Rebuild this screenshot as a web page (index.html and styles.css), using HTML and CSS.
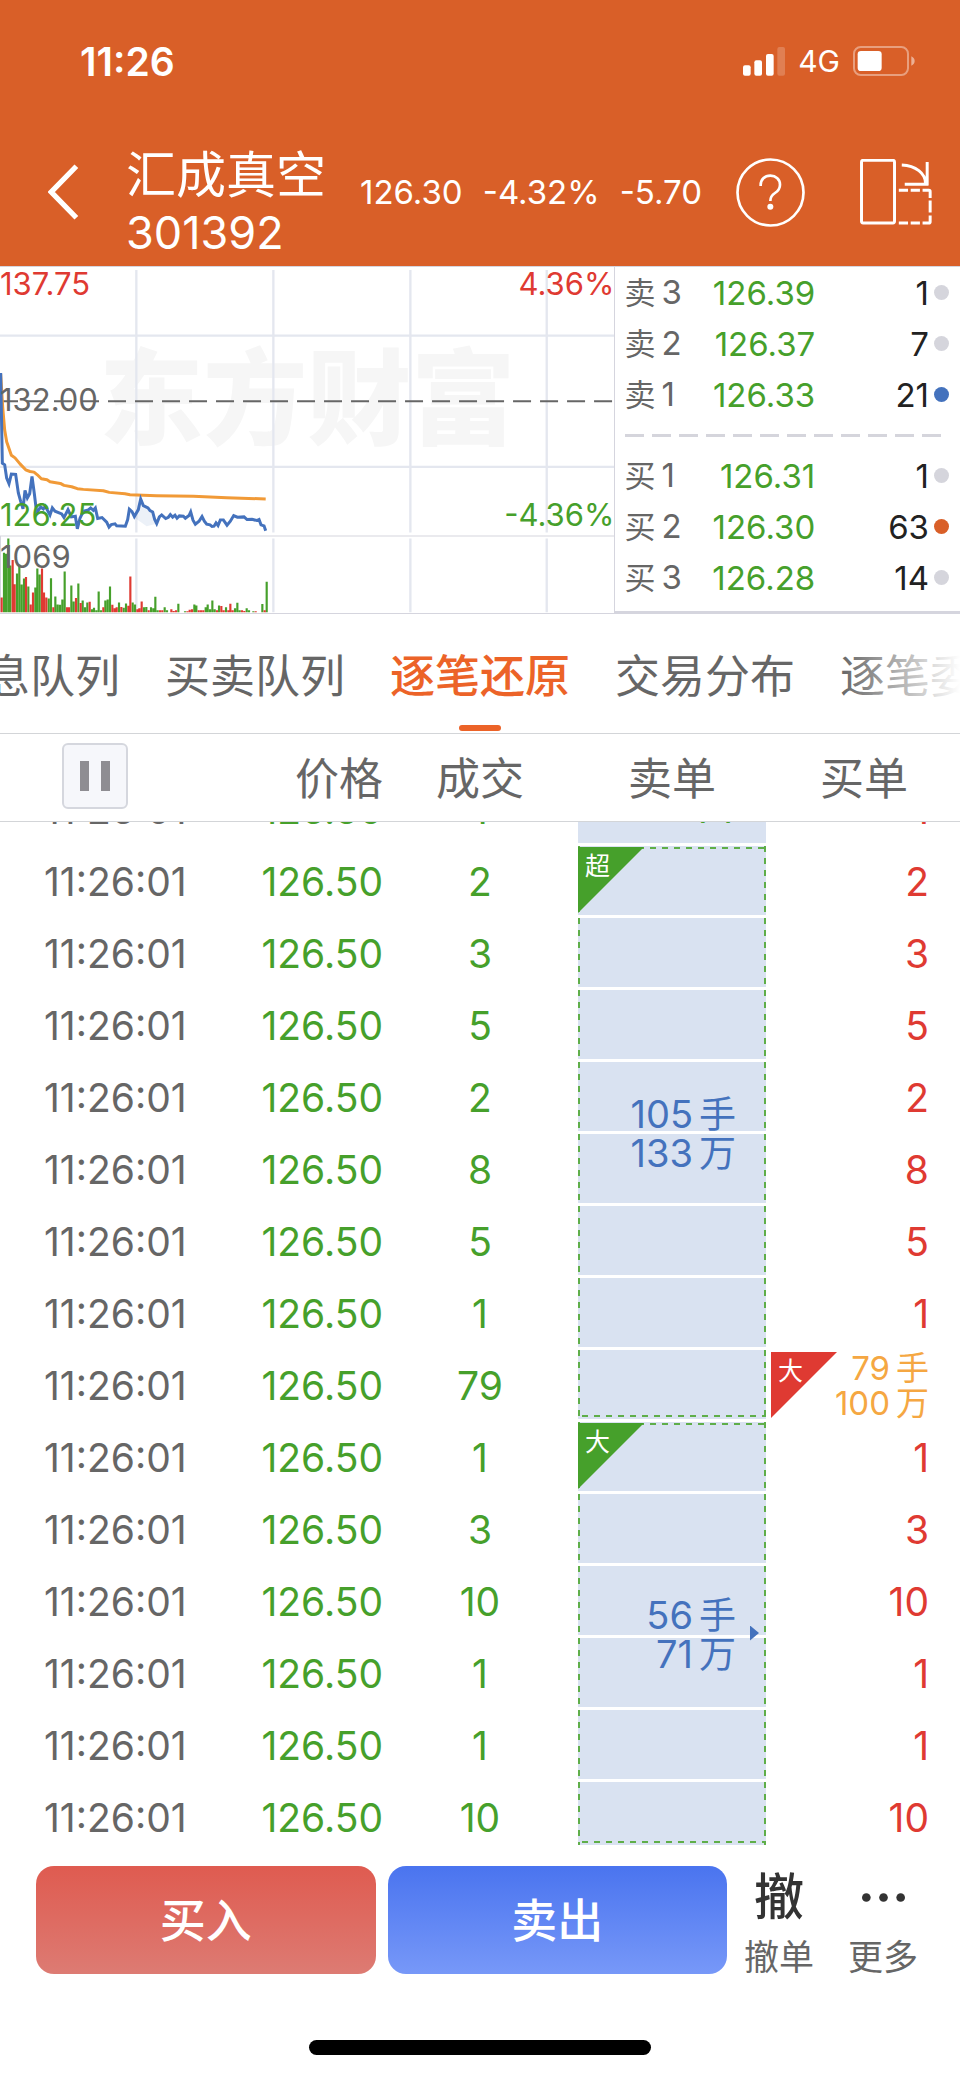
FILE: index.html
```html
<!DOCTYPE html>
<html lang="zh-CN">
<head>
<meta charset="utf-8">
<meta name="viewport" content="width=device-width, initial-scale=1">
<title>汇成真空 301392</title>
<link rel="stylesheet" href="styles.css">
</head>
<body>
<header class="header">
  <div class="status">
    <span class="status-time">11:26</span>
    <div class="status-right">
      <svg class="signal" viewBox="0 0 126 87" aria-hidden="true"><g fill="#fff"><rect x="0" y="55" width="23" height="31" rx="6"/><rect x="34" y="40" width="23" height="46" rx="6"/><rect x="69" y="21" width="23" height="65" rx="6"/><rect x="103" y="0" width="23" height="86" rx="6" opacity=".2"/></g></svg>
      <span>4G</span>
      <svg class="battery" viewBox="0 0 186 90" aria-hidden="true"><rect x="3" y="3" width="162" height="84" rx="20" fill="none" stroke="#fff" stroke-opacity=".4" stroke-width="6"/><rect x="14" y="15" width="72" height="60" rx="10" fill="#fff"/><path d="M175 31q10 5 10 14t-10 14z" fill="#fff" fill-opacity=".5"/></svg>
    </div>
  </div>
  <div class="nav">
    <button class="back" type="button" aria-label="返回"><svg viewBox="0 0 94 168" aria-hidden="true"><path d="M86 6 10 84l76 78" fill="none" stroke="#fff" stroke-width="16"/></svg></button>
    <h1 class="stock"><span class="stock-name">汇成真空</span><span class="stock-code">301392</span></h1>
    <div class="quote"><span>126.30</span><span>-4.32%</span><span>-5.70</span></div>
    <button class="help" type="button" aria-label="帮助"><svg viewBox="0 0 207 207" aria-hidden="true"><g fill="none" stroke="#fff" stroke-width="8"><circle cx="103.500" cy="103.500" r="99"/><path d="M74 84V81C74 64 86 53 103 53S132 64 132 80C132 92 126 99 117 105C106 112 103 117 103 129"/></g><circle cx="103" cy="146" r="9" fill="#fff"/></svg></button>
    <button class="rotate" type="button" aria-label="横屏"><svg viewBox="1140 474 217 200" aria-hidden="true"><g fill="none" stroke="#fff" stroke-width="9"><rect x="1144" y="478" width="100" height="190" rx="5"/><path d="M1266 492C1308 494 1338 517 1338 548M1343 483V554M1275 550.500H1346"/><path d="M1257 569h28M1293 569h28M1329 569h19q4 0 4 4v19M1352 600v36M1352 645v19q0 4-4 4h-19M1321 668h-28M1285 668h-28"/></g></svg></button>
  </div>
</header>

<section class="market">
  <div class="chart">
    <span class="watermark" aria-hidden="true">东方财富</span>
    <svg class="plot" viewBox="0 18 1843 1044" preserveAspectRatio="none" role="img" aria-label="分时走势">
      <g fill="none">
        <path stroke="#e4e7ef" stroke-width="7" d="M0 225H1843M0 621H1843M409 27V819M820 27V819M1231 27V819M1640 27V819M409 837V1060M820 837V1060M1231 837V1060M1640 837V1060"/>
        <path stroke="#d5d5de" stroke-width="3" d="M0 829.500H1843M1.500 829V1060"/>
        <path stroke="#666" stroke-width="6" stroke-dasharray="54 27" d="M0 423H1836"/>
        <path fill="#4472bd" fill-opacity=".1" d="M412 740L422 710 432 740 460 755 472 792 440 800 405 775z"/>
        <path stroke="#f19a37" stroke-width="9" stroke-linejoin="round" d="M2 340L8 440 14 510 20 545 34 586 45 594 60 612 77 630 90 635 102 637 112 645 124 657 141 660 150 666 181 671 192 677 215 681 232 687 250 689 310 693 328 698 375 702 390 705 470 708 580 710 680 714 797 718"/>
        <path stroke="#4472bd" stroke-width="9" stroke-linejoin="miter" d="M2 338L5 500 7 610 14 615 20 655 27 672 34 643 47 644 55 700 62 725 69 748 75 692 82 715 89 702 96 650 103 702 110 760 122 742 130 748 136 740 150 766 157 745 165 755 185 763 192 774 204 750 214 772 226 770 232 808 240 776 250 755 265 751 272 745 280 752 286 745 293 777 306 774 320 788 327 803 334 795 345 793 350 799 376 800 383 780 388 749 396 756 403 771 415 750 422 718 430 738 444 745 450 753 458 757 464 780 470 792 478 772 485 766 497 777 505 773 511 765 518 773 525 767 531 776 538 769 550 770 556 776 567 768 572 757 579 782 586 794 597 785 606 771 613 785 620 794 630 796 636 801 642 800 648 790 654 798 661 781 670 781 681 797 691 785 701 768 712 773 732 772 741 780 756 779 770 783 777 780 783 796 792 799 797 814"/>
        <path stroke="#46a02b" stroke-width="6.500" d="M12 1060v-180M18 1060v-177M25 1060v-223M31 1060v-141M51 1060v-117M58 1060v-144M65 1060v-84M72 1060v-102M85 1060v-78M106 1060v-75M112 1060v-132M119 1060v-114M146 1060v-42M153 1060v-103M166 1060v-48M173 1060v-24M180 1060v-23M187 1060v-39M194 1060v-123M214 1060v-81M221 1060v-33M235 1060v-87M248 1060v-36M255 1060v-15M262 1060v-30M276 1060v-9M282 1060v-14M289 1060v-6M296 1060v-63M303 1060v-6M316 1060v-36M323 1060v-39M330 1060v-78M357 1060v-30M371 1060v-14M378 1060v-27M398 1060v-30M405 1060v-24M432 1060v-15M439 1060v-16M453 1060v-15M460 1060v-12M466 1060v-47M473 1060v-6M494 1060v-15M501 1060v-6M535 1060v-26M555 1060v-3M583 1060v-24M589 1060v-21M617 1060v-15M623 1060v-24M630 1060v-9M637 1060v-36M644 1060v-9M657 1060v-21M678 1060v-15M705 1060v-12M712 1060v-29M719 1060v-6M740 1060v-12M747 1060v-6M760 1060v-3M787 1060v-25M800 1060v-92"/>
        <path stroke="#df3a32" stroke-width="6.500" d="M5 1060v-45M38 1060v-158M44 1060v-85M78 1060v-107M92 1060v-24M99 1060v-60M126 1060v-132M132 1060v-60M139 1060v-45M160 1060v-15M201 1060v-15M207 1060v-15M228 1060v-43M242 1060v-28M269 1060v-32M310 1060v-15M337 1060v-23M344 1060v-12M350 1060v-15M364 1060v-16M385 1060v-20M391 1060v-108M412 1060v-9M418 1060v-12M425 1060v-33M446 1060v-6M480 1060v-6M487 1060v-6M514 1060v-9M521 1060v-4M528 1060v-6M562 1060v-3M569 1060v-8M576 1060v-9M596 1060v-6M603 1060v-6M610 1060v-6M651 1060v-6M664 1060v-19M671 1060v-6M685 1060v-6M691 1060v-26M698 1060v-6M726 1060v-6M733 1060v-4M767 1060v-3M794 1060v-6"/>
      </g>
    </svg>
    <div class="price-labels">
      <div class="label-row red"><span>137.75</span><span>4.36%</span></div>
      <div class="label-row gray"><span>132.00</span></div>
      <div class="label-row green"><span>126.25</span><span>-4.36%</span></div>
    </div>
    <div class="volume-label gray">1069</div>
  </div>
  <div class="book">
    <table class="levels">
      <tr><th scope="row">卖<span>3</span></th><td class="green">126.39</td><td class="qty">1<i class="dot"></i></td></tr>
      <tr><th scope="row">卖<span>2</span></th><td class="green">126.37</td><td class="qty">7<i class="dot"></i></td></tr>
      <tr><th scope="row">卖<span>1</span></th><td class="green">126.33</td><td class="qty">21<i class="dot dot-blue"></i></td></tr>
    </table>
    <div class="divider"></div>
    <table class="levels">
      <tr><th scope="row">买<span>1</span></th><td class="green">126.31</td><td class="qty">1<i class="dot"></i></td></tr>
      <tr><th scope="row">买<span>2</span></th><td class="green">126.30</td><td class="qty">63<i class="dot dot-orange"></i></td></tr>
      <tr><th scope="row">买<span>3</span></th><td class="green">126.28</td><td class="qty">14<i class="dot"></i></td></tr>
    </table>
  </div>
</section>

<nav class="tabs">
  <a href="#message">消息队列</a>
  <a href="#queue">买卖队列</a>
  <a href="#restore" class="active" aria-current="page">逐笔还原</a>
  <a href="#spread">交易分布</a>
  <a href="#orders">逐笔委托</a>
</nav>

<table class="ticks ticks-head">
  <colgroup><col class="col-time"><col class="col-price"><col class="col-vol"><col class="col-sell"><col class="col-buy"></colgroup>
  <tr>
    <th class="time"><button class="pause" type="button" aria-label="暂停"><svg viewBox="0 0 30 30" aria-hidden="true"><path fill="#8e8d92" d="M0 0h9v30H0zM21 0h9v30h-9z"/></svg></button></th>
    <th class="price">价格</th><th>成交</th><th>卖单</th><th>买单</th>
  </tr>
</table>

<main class="scroller">
  <table class="ticks ticks-body">
    <colgroup><col class="col-time"><col class="col-price"><col class="col-vol"><col class="col-sell"><col class="col-buy"></colgroup>
    <tr><td class="time">11:26:01</td><td class="price">126.50</td><td class="vol">1</td><td class="sell"><div class="single green">44</div></td><td class="buy">1</td></tr>
    <tr><td class="time">11:26:01</td><td class="price">126.50</td><td class="vol">2</td>
      <td class="sell" rowspan="8"><div class="group group-8"><span class="badge badge-sell">超</span><span>105<b>手</b></span><span>133<b>万</b></span></div></td><td class="buy">2</td></tr>
    <tr><td class="time">11:26:01</td><td class="price">126.50</td><td class="vol">3</td><td class="buy">3</td></tr>
    <tr><td class="time">11:26:01</td><td class="price">126.50</td><td class="vol">5</td><td class="buy">5</td></tr>
    <tr><td class="time">11:26:01</td><td class="price">126.50</td><td class="vol">2</td><td class="buy">2</td></tr>
    <tr><td class="time">11:26:01</td><td class="price">126.50</td><td class="vol">8</td><td class="buy">8</td></tr>
    <tr><td class="time">11:26:01</td><td class="price">126.50</td><td class="vol">5</td><td class="buy">5</td></tr>
    <tr><td class="time">11:26:01</td><td class="price">126.50</td><td class="vol">1</td><td class="buy">1</td></tr>
    <tr><td class="time">11:26:01</td><td class="price">126.50</td><td class="vol">79</td><td class="buy buy-large"><div class="large"><span class="badge badge-buy">大</span><span>79<b>手</b></span><span>100<b>万</b></span></div></td></tr>
    <tr><td class="time">11:26:01</td><td class="price">126.50</td><td class="vol">1</td>
      <td class="sell" rowspan="6"><div class="group group-6"><span class="badge badge-sell">大</span><span>56<b>手</b></span><span>71<b>万</b></span><i class="caret"></i></div></td><td class="buy">1</td></tr>
    <tr><td class="time">11:26:01</td><td class="price">126.50</td><td class="vol">3</td><td class="buy">3</td></tr>
    <tr><td class="time">11:26:01</td><td class="price">126.50</td><td class="vol">10</td><td class="buy">10</td></tr>
    <tr><td class="time">11:26:01</td><td class="price">126.50</td><td class="vol">1</td><td class="buy">1</td></tr>
    <tr><td class="time">11:26:01</td><td class="price">126.50</td><td class="vol">1</td><td class="buy">1</td></tr>
    <tr><td class="time">11:26:01</td><td class="price">126.50</td><td class="vol">10</td><td class="buy">10</td></tr>
  </table>
</main>

<footer class="footer">
  <div class="actions">
    <button class="trade trade-buy" type="button">买入</button>
    <button class="trade trade-sell" type="button">卖出</button>
    <button class="action" type="button"><span class="action-icon">撤</span><span>撤单</span></button>
    <button class="action" type="button"><span class="action-icon"><svg viewBox="0 0 129 27" aria-hidden="true"><g fill="#333"><circle cx="13" cy="13.500" r="13"/><circle cx="64.500" cy="13.500" r="13"/><circle cx="116" cy="13.500" r="13"/></g></svg></span><span>更多</span></button>
  </div>
  <div class="home-bar"></div>
</footer>
</body>
</html>
```
FILE: styles.css
```css
* { box-sizing: border-box; }

body {
  margin: 0;
  height: 100vh;
  display: flex;
  flex-direction: column;
  overflow: hidden;
  background: #fff;
  color: #666;
  font-family: Inter, "Noto Sans CJK SC", sans-serif;
  font-size: 39px;
}

button {
  padding: 0;
  border: 0;
  background: none;
  color: inherit;
  font: inherit;
}

svg { display: block; }
table { width: 100%; border-collapse: collapse; border-spacing: 0; }
th, td { padding: 0; font-weight: 400; }
b, i { font-weight: 400; font-style: normal; }

.red { color: #df3a32; }
.green { color: #46a02b; }
.gray { color: #666; }

/* Header */
.header {
  flex: none;
  height: 266px;
  background: #d95f28;
  color: #fff;
}

.status {
  display: flex;
  align-items: center;
  justify-content: space-between;
  height: 122px;
  padding: 0 45px 0 80px;
}
.status-time { font-weight: 600; font-size: 39px; }
.status-right {
  display: flex;
  align-items: center;
  gap: 13px;
  font-size: 30px;
}
.signal { width: 42px; height: 29px; }
.battery { width: 62px; height: 30px; }

.nav {
  display: flex;
  align-items: center;
  height: 140px;
  padding: 0 28px 0 48px;
}
.back svg { width: 31px; height: 56px; }
.stock {
  display: flex;
  flex-direction: column;
  margin: 0 0 0 47px;
  padding-top: 24px;
  font-weight: 400;
  line-height: 58px;
}
.stock-name { font-size: 50px; }
.stock-code { font-size: 45px; }
.quote {
  display: flex;
  flex: 1;
  justify-content: flex-end;
  gap: 20px;
  padding-right: 34px;
  font-size: 33px;
}
.help svg { width: 69px; height: 69px; }
.rotate { margin-left: 55px; }
.rotate svg { width: 72px; height: 66px; }

/* Chart and order book */
.market {
  flex: none;
  display: grid;
  grid-template-columns: 64% 36%;
  height: 348px;
  border-top: 1px solid #d5d5de;
  border-bottom: 1px solid #d5d5de;
}

.chart {
  position: relative;
  display: flex;
  flex-direction: column;
  justify-content: space-between;
  font-size: 31px;
  line-height: 34px;
}
.watermark {
  position: absolute;
  top: 80px;
  left: 0;
  right: 0;
  text-align: center;
  font-size: 104px;
  font-weight: 900;
  line-height: 1;
  color: #f6f6f6;
}
.plot {
  position: absolute;
  inset: 0;
  width: 100%;
  height: 100%;
}
.price-labels {
  position: relative;
  display: flex;
  flex-direction: column;
  justify-content: space-between;
  height: 265px;
}
.label-row {
  display: flex;
  justify-content: space-between;
}
.volume-label { position: relative; height: 73px; }

.book {
  border-left: 1px solid #d5d5de;
  border-bottom: 2px solid #d5d5de;
  font-size: 33px;
}
.levels { table-layout: fixed; }
.levels tr { height: 51px; }
.levels th {
  width: 25%;
  padding-left: 9px;
  text-align: left;
  font-size: 31px;
  line-height: 50px;
}
.levels th span { margin-left: 6px; font-size: 33px; }
.levels td { text-align: right; line-height: 50px; }
.levels .green { width: 33%; }
.qty { padding-right: 11px; color: #222; }
.dot {
  display: inline-block;
  width: 15px;
  height: 15px;
  margin-left: 5px;
  border-radius: 50%;
  background: #d5d5dc;
  vertical-align: 5px;
}
.dot-blue { background: #4472bd; }
.dot-orange { background: #d95f28; }
.divider {
  height: 3px;
  margin: 14px 18px 13px 10px;
  background: repeating-linear-gradient(90deg, #d5d5dc 0 19px, transparent 19px 27px);
}

/* Tabs */
.tabs {
  position: relative;
  flex: none;
  display: flex;
  justify-content: center;
  gap: 45px;
  height: 120px;
  border-bottom: 1px solid #d3d5d8;
  overflow: hidden;
}
.tabs::after {
  content: "";
  position: absolute;
  inset: 0 0 0 auto;
  width: 120px;
  background: linear-gradient(90deg, rgba(255, 255, 255, 0), #fff);
}
.tabs a {
  position: relative;
  flex: none;
  color: #666;
  font-size: 45px;
  line-height: 126px;
  text-decoration: none;
}
.tabs .active { color: #ec6328; font-weight: 500; }
.tabs .active::after {
  content: "";
  position: absolute;
  left: 50%;
  top: 111px;
  width: 42px;
  height: 6px;
  margin-left: -21px;
  border-radius: 3px;
  background: #ec6328;
}

/* Tick table */
.ticks { table-layout: fixed; }
.col-time { width: 24%; }
.col-price { width: 16%; }
.col-vol, .col-sell, .col-buy { width: 20%; }
.ticks tr { height: 72px; }
.ticks .time { padding-left: 44px; text-align: left; }
.ticks .price { padding-right: 1px; text-align: right; }

.ticks-head {
  flex: none;
  border-bottom: 1px solid #d3d5d8;
  font-size: 44px;
}
.ticks-head tr { height: 87px; }
.ticks-head th { padding-top: 3px; line-height: 84px; }
.ticks-head .time { padding-top: 0; padding-bottom: 3px; padding-left: 62px; }
.pause {
  display: grid;
  place-items: center;
  width: 66px;
  height: 66px;
  border: 2px solid #d5d7de;
  border-radius: 6px;
  background: #f6f7fb;
}
.pause svg { width: 30px; height: 30px; }

.scroller { flex: 1; min-height: 0; overflow: hidden; }
.ticks-body { margin-top: -48px; }
.ticks-body td { line-height: 70px; }
.ticks-body .price, .vol { color: #46a02b; }
.vol { text-align: center; }
.buy { padding-right: 31px; text-align: right; color: #df3a32; }
.ticks-body .sell { padding: 0 2px; vertical-align: top; text-align: right; }

.single {
  height: 69px;
  padding-right: 30px;
  background: #d9e2f1;
}
.group {
  --dash: #5fae49;
  position: relative;
  display: flex;
  flex-direction: column;
  justify-content: center;
  padding-top: 2px;
  padding-right: 30px;
  color: #4472bd;
  font-size: 38px;
  line-height: 39px;
  background:
    repeating-linear-gradient(90deg, var(--dash) 0 6px, transparent 6px 12px) 0 1px / 100% 2px no-repeat,
    repeating-linear-gradient(90deg, transparent 0 4px, var(--dash) 4px 10px, transparent 10px 12px) 0 calc(100% - 2px) / 100% 2px no-repeat,
    repeating-linear-gradient(var(--dash) 0 6px, transparent 6px 12px) 0 0 / 2px 100% no-repeat,
    repeating-linear-gradient(var(--dash) 0 6px, transparent 6px 12px) 100% 0 / 2px 100% no-repeat,
    repeating-linear-gradient(#d9e2f1 0 69px, #fff 69px 72px);
}
.group-8 { height: 573px; }
.group-6 { height: 423px; }
.group b, .large b { margin-left: 6px; }
.group b { font-size: 37px; }

.badge {
  position: absolute;
  top: 1px;
  left: 0;
  width: 66px;
  height: 66px;
  padding: 7px 0 0 7px;
  clip-path: polygon(0 0, 100% 0, 0 100%);
  color: #fff;
  font-size: 25px;
  line-height: 25px;
  text-align: left;
}
.badge-sell { background: #46a02b; }
.badge-buy { background: #df3a32; }
.ticks-body .buy-large { padding-left: 3px; }
.large {
  position: relative;
  display: flex;
  flex-direction: column;
  justify-content: center;
  height: 70px;
  color: #f5a742;
  font-size: 33px;
  line-height: 35px;
}
.caret {
  position: absolute;
  top: 50%;
  right: 7px;
  width: 9px;
  height: 15px;
  margin-top: -8px;
  background: #4472bd;
  clip-path: polygon(0 0, 100% 50%, 0 100%);
}

/* Footer */
.footer {
  flex: none;
  height: 234px;
  padding: 21px 25px 24px 36px;
  display: flex;
  flex-direction: column;
  justify-content: space-between;
}
.actions {
  display: grid;
  grid-template-columns: 1fr 1fr 104px 104px;
  align-items: start;
}
.trade {
  height: 108px;
  padding-bottom: 6px;
  border-radius: 18px;
  color: #fff;
  font-size: 46px;
  font-weight: 500;
}
.trade-buy { margin-right: 6px; background: linear-gradient(#df5b50, #dd7b73); }
.trade-sell { margin-left: 6px; background: linear-gradient(#4a74ef, #7798f8); }
.action {
  display: flex;
  flex-direction: column;
  align-items: center;
  font-size: 35px;
  line-height: 58px;
}
.action-icon {
  display: grid;
  place-items: center;
  height: 62px;
  color: #333;
  font-size: 50px;
  font-weight: 500;
  line-height: 62px;
}
.action-icon svg { width: 43px; height: 9px; }
.home-bar {
  align-self: center;
  width: 342px;
  height: 15px;
  margin-right: 11px;
  border-radius: 8px;
  background: #000;
}
```
